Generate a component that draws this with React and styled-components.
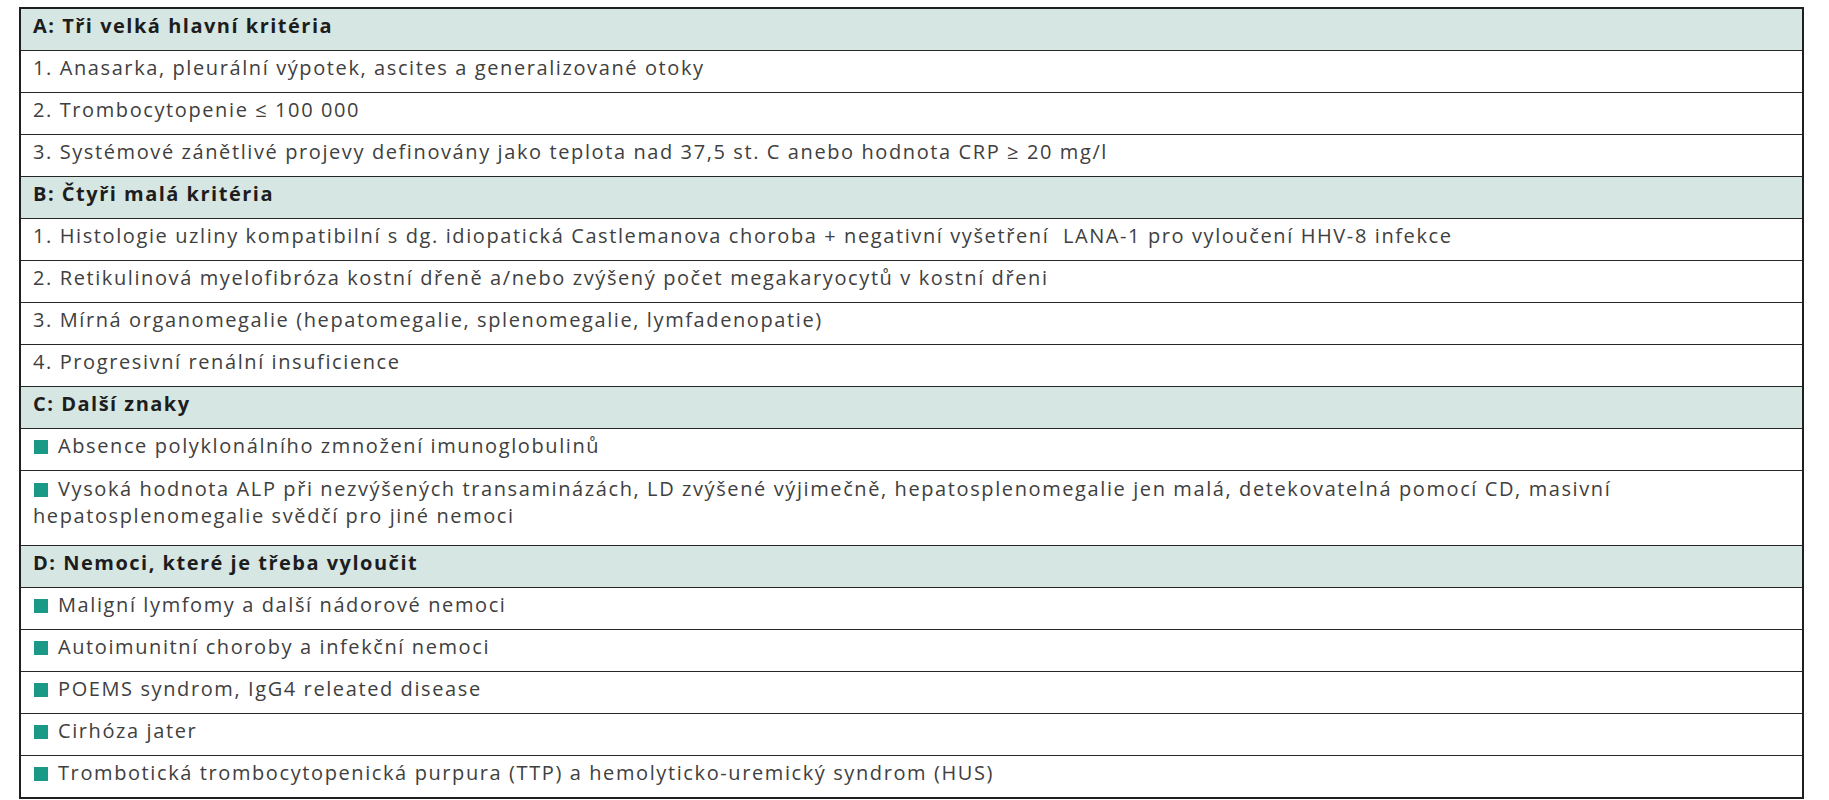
import React from "react";
import styled, { createGlobalStyle } from "styled-components";

const GlobalStyle = createGlobalStyle`
  html, body {
    margin: 0;
    padding: 0;
    background: #ffffff;
  }
  body {
    font-family: "Open Sans", "Noto Sans", "Liberation Sans", sans-serif;
  }
`;

const sections = [
  {
    title: "A: Tři velká hlavní kritéria",
    bullet: false,
    items: [
      "1. Anasarka, pleurální výpotek, ascites a generalizované otoky",
      "2. Trombocytopenie ≤ 100 000",
      "3. Systémové zánětlivé projevy definovány jako teplota nad 37,5 st. C anebo hodnota CRP ≥ 20 mg/l",
    ],
  },
  {
    title: "B: Čtyři malá kritéria",
    bullet: false,
    items: [
      "1. Histologie uzliny kompatibilní s dg. idiopatická Castlemanova choroba + negativní vyšetření  LANA-1 pro vyloučení HHV-8 infekce",
      "2. Retikulinová myelofibróza kostní dřeně a/nebo zvýšený počet megakaryocytů v kostní dřeni",
      "3. Mírná organomegalie (hepatomegalie, splenomegalie, lymfadenopatie)",
      "4. Progresivní renální insuficience",
    ],
  },
  {
    title: "C: Další znaky",
    bullet: true,
    items: [
      "Absence polyklonálního zmnožení imunoglobulinů",
      [
        "Vysoká hodnota ALP při nezvýšených transaminázách, LD zvýšené výjimečně, hepatosplenomegalie jen malá, detekovatelná pomocí CD, masivní",
        "hepatosplenomegalie svědčí pro jiné nemoci",
      ],
    ],
  },
  {
    title: "D: Nemoci, které je třeba vyloučit",
    bullet: true,
    items: [
      "Maligní lymfomy a další nádorové nemoci",
      "Autoimunitní choroby a infekční nemoci",
      "POEMS syndrom, IgG4 releated disease",
      "Cirhóza jater",
      "Trombotická trombocytopenická purpura (TTP) a hemolyticko-uremický syndrom (HUS)",
    ],
  },
];

const Page = styled.div`
  padding: 7px 0 0 19px;
`;

const Table = styled.table`
  width: 1785px;
  border-collapse: collapse;
  border: 2px solid #1f1f1f;
`;

const HeadCell = styled.td`
  background: #d6e6e2;
  border: 1.5px solid #262626;
  padding: 3px 12px 11px;
  height: 27px;
  line-height: 27px;
  font-size: 20px;
  font-weight: 700;
  color: #1d1d1d;
  letter-spacing: 1.5px;
`;

const Cell = styled.td`
  border: 1.5px solid #262626;
  padding: ${(p) => (p.$multi ? "4px 12px 16px" : "3px 12px 11px")};
  height: 27px;
  line-height: 27px;
  font-size: 20px;
  font-weight: 400;
  color: #404040;
  letter-spacing: 1.6px;
  white-space: pre;
`;

const Line = styled.div`
  display: block;
`;

const Square = styled.span`
  display: inline-block;
  width: 14px;
  height: 14px;
  margin: 0 10px 0 1px;
  background: #1a9986;
  vertical-align: -1px;
`;

export default function App() {
  return (
    <Page>
      <GlobalStyle />
      <Table>
        <tbody>
          {sections.map((s) => (
            <React.Fragment key={s.title}>
              <tr>
                <HeadCell>{s.title}</HeadCell>
              </tr>
              {s.items.map((item, i) => {
                const lines = Array.isArray(item) ? item : [item];
                return (
                  <tr key={i}>
                    <Cell $multi={lines.length > 1}>
                      {lines.map((l, j) => (
                        <Line key={j}>
                          {s.bullet && j === 0 && <Square />}
                          {l}
                        </Line>
                      ))}
                    </Cell>
                  </tr>
                );
              })}
            </React.Fragment>
          ))}
        </tbody>
      </Table>
    </Page>
  );
}
